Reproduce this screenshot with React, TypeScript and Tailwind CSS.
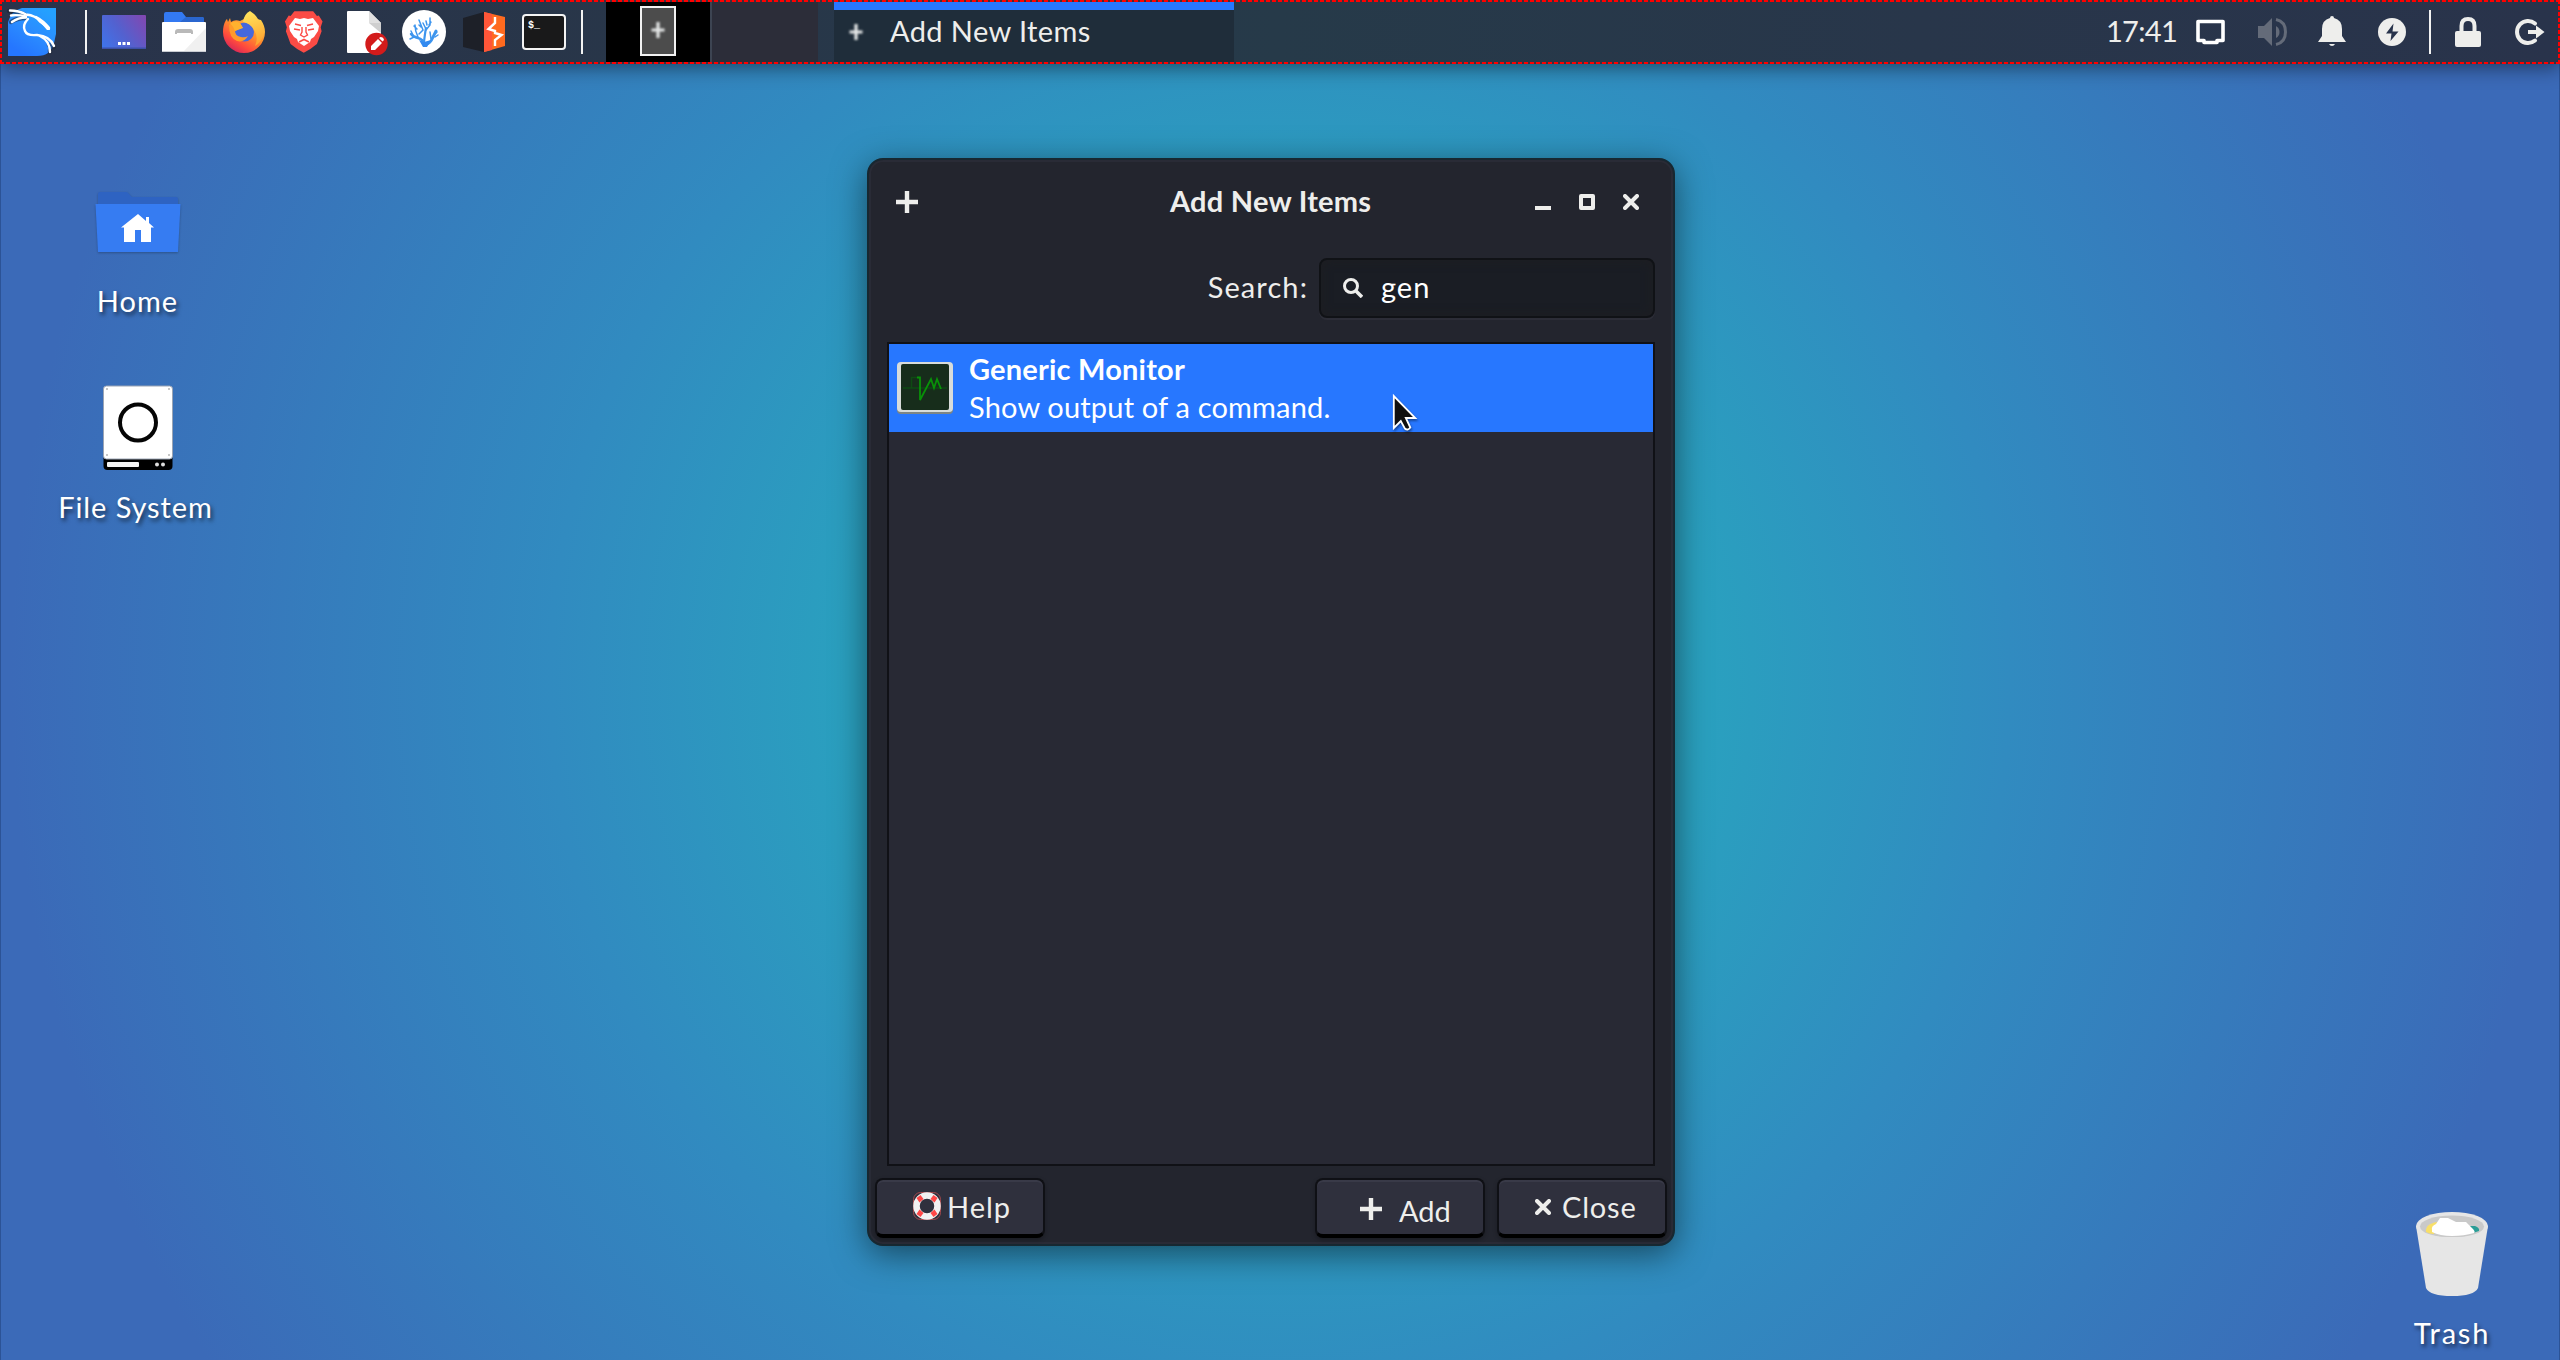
import type { ReactNode } from "react";

type IconProps = { box: string; className: string; children: ReactNode };

function Icon({ box, className, children }: IconProps) {
  return (
    <svg viewBox={box} className={`block shrink-0 ${className}`} fill="none">
      {children}
    </svg>
  );
}

/* Launchers share one panel-wide coordinate system; each slot shows its own 60px window. */
function Launchers() {
  const slot = "h-[60px] w-[60px]";
  return (
    <div className="flex">
      <Icon box="94 2 60 60" className={slot}>
        <defs>
          <linearGradient id="desk" x1="102" y1="46" x2="146" y2="16" gradientUnits="userSpaceOnUse">
            <stop stopColor="#3f74ea" />
            <stop offset=".45" stopColor="#5361cf" />
            <stop offset="1" stopColor="#8347b0" />
          </linearGradient>
        </defs>
        <rect x="102" y="15" width="44" height="34" rx="1" fill="url(#desk)" />
        <path d="M102 47.5h44v1.5h-44z" fill="#3c50a8" />
        <path d="M118 42h3v3h-3zM122.500 42h3v3h-3zM127 42h3v3h-3z" fill="#fff" />
      </Icon>
      <Icon box="154 2 60 60" className={slot}>
        <path d="M164 23V14q0-2 2-2h16l4 5h16q2 0 2 2v4z" fill="#3379f2" />
        <path d="M180 22l6-5h16q2 0 2 2v3z" fill="#2a66cf" />
        <rect x="162" y="22" width="44" height="30" rx="1" fill="#fff" />
        <path d="M206 28v23q0 1-1 1h-22z" fill="#f0f0f0" />
        <path d="M162 51h44v1h-44z" fill="#c9ccd2" />
        <path d="M175 34v-2q0-3 3-3h12q3 0 3 3v2h-2v-1h-14v1z" fill="#b9b9b9" />
      </Icon>
      <Icon box="214 2 60 60" className={slot}>
        <defs>
          <linearGradient id="ffBody" x1="256" y1="14" x2="232" y2="52" gradientUnits="userSpaceOnUse">
            <stop stopColor="#ffd84a" />
            <stop offset=".45" stopColor="#ff8f2c" />
            <stop offset=".75" stopColor="#ff4a3d" />
            <stop offset="1" stopColor="#d3235c" />
          </linearGradient>
          <linearGradient id="ffTail" x1="250" y1="11" x2="262" y2="44" gradientUnits="userSpaceOnUse">
            <stop stopColor="#ffe45c" />
            <stop offset="1" stopColor="#ffa02e" />
          </linearGradient>
        </defs>
        <path d="M244 53a21 21 0 0 1-21-21q0-7 3-12l1-1 1 3 2-4 1 4q4-3 9-1l8-4 13 3q4 6 4 12a21 21 0 0 1-21 21z" fill="url(#ffBody)" />
        <circle cx="244.500" cy="32" r="9.500" fill="#4668dc" />
        <path d="M250 11q6 4 8 8 6 5 6 14-2 9-9 13 4-9-1-16-4-7-11-8 1-8 7-11z" fill="url(#ffTail)" />
        <path d="M229 25q5-5 11-2l3 5h-1q-4 1-7 3 0 5 6 6 4 1 7-1-4 7-11 5-8-3-8-16z" fill="#ff9a2b" />
        <path d="M230 23q6-3 10 0l3 5-8 3q-2-5-5-8z" fill="#ffb22e" />
      </Icon>
      <Icon box="274 2 60 60" className={slot}>
        <path d="M294 11h20l4 5 2-.5 4 6-2 6 1 4-5 13q-6 5-14 9-8-4-14-9l-5-13 1-4-2-6 4-6 2 .5z" fill="#fb4b45" transform="matrix(.94 0 0 .98 18 .4)" />
        <path d="M295 18l5 1 4-1 4 1 5-1 6 8-1 5-4 6-3 2-1 3-6 4-6-4-1-3-3-2-4-6-1-5z" fill="#fff" />
        <path d="M295 24l6 1.500M313 24l-6 1.500M302 27v5l-1.500 3 3.500 2 3.500-2-1.500-3v-5" stroke="#fb4b45" strokeWidth="1.400" />
        <path d="M294 29l6 1M314 29l-6 1M299 42l5-2.500 5 2.500" stroke="#fb4b45" strokeWidth="1.700" />
      </Icon>
      <Icon box="334 2 60 60" className={slot}>
        <path d="M347 12q0-1 1-1h21l12 12v29q0 1-1 1h-32q-1 0-1-1z" fill="#fff" />
        <path d="M369 11l12 12h-12z" fill="#e0e0e0" />
        <path d="M369 23h12v10z" fill="#cfcfcf" />
        <circle cx="376.500" cy="44" r="11.200" fill="#d31b1b" />
        <path d="M371 50v-4l7-7 4 4-7 7zM379 38l1.500-1q3 0 3.500 3l-1.500 1.500z" fill="#fff" />
      </Icon>
      <Icon box="394 2 60 60" className={slot}>
        <circle cx="424" cy="32" r="22" fill="#fff" />
        <g stroke="#3d95ee" strokeLinecap="round">
          <path d="M425 45q-2-6-7-7t-7-4" strokeWidth="2.400" />
          <path d="M425 45q6-2 7-6l4-8" strokeWidth="2.800" />
          <path d="M424 42q1-9 2-14" strokeWidth="2.200" />
          <path d="M418 37q-3-6-3-12M413 35l-2-4M419 34l4-4-4-10M417 29l-3-3M426 29l-3-6M426 30l4-5v-7M421 27l-2-2M427 25l-1-4M431 39l-1-7M434 35l3-3M435 37l3-2M410 39l4-2M429 25l2-3" strokeWidth="1.500" />
        </g>
        <path d="M419 40l5 2 7-2-4 7h-4z" fill="#338af0" />
      </Icon>
      <Icon box="454 2 60 60" className={slot}>
        <path d="M463 18l21-6v40l-21-5z" fill="#1d2028" />
        <path d="M484 12l21 5v29l-21 6z" fill="#ff6a1f" />
        <path d="M484 12l8 2v36l-8 2z" fill="#ff5638" />
        <path d="M495 17v6l-6.500 6 6.500 2v2l6.500 2-6.500 5v6" stroke="#fff" strokeWidth="2.400" />
      </Icon>
      <div className="flex h-[60px] w-[60px] items-center justify-center">
        <div className="h-9 w-11 rounded-[4px] border-2 border-[#f4f4f4] bg-[#19191a] pt-1 pl-1 font-['Liberation_Mono'] text-[10px] leading-3 font-bold text-white">
          $_
        </div>
      </div>
    </div>
  );
}

function KaliLogo() {
  return (
    <Icon box="2 2 60 60" className="h-[60px] w-[60px]">
      <defs>
        <linearGradient id="kali" x1="20" y1="52" x2="46" y2="10" gradientUnits="userSpaceOnUse">
          <stop stopColor="#2576ff" />
          <stop offset=".5" stopColor="#2b8dff" />
          <stop offset="1" stopColor="#24a1ff" />
        </linearGradient>
      </defs>
      <path d="M22 8h34v26l-2 9q-3 13-17 13H8V22Q12 10 22 8z" fill="url(#kali)" />
      <path
        d="M9 11q9 0 16 4M11 22q6-4 14-4M49 45l5 2M50 50v2"
        stroke="#1c2333"
        strokeWidth="4.500"
        strokeLinecap="round"
        opacity=".55"
      />
      <g stroke="#fff" strokeWidth="2.400" strokeLinecap="round" strokeLinejoin="round">
        <path d="M10 10.500q9 0 16 4 10 1 14 7l8 6" />
        <path d="M11 15.500q7-1 15 1" />
        <path d="M12 22q6-4.500 14-4.500" />
        <path d="M36 17q8 4 13 11" />
        <path d="M28 19q-6 6-3 12 2 5 12 4 13 1 17 11" />
        <path d="M40 36q10 5 10 16" />
      </g>
      <path d="M41 23l8 3 1 4-3 0z" fill="#fff" />
    </Icon>
  );
}

function SoftPlus() {
  return (
    <Icon box="0 0 16 16" className="h-4 w-4 blur-[0.8px]">
      <path d="M8 0v16M1.500 8h13" stroke="#e6e8e8" strokeWidth="3.200" />
    </Icon>
  );
}

function Tray() {
  return (
    <div className="ml-auto flex items-center">
      <span className="w-[74px] pb-[2px] text-[29px] leading-9 tracking-[-0.7px] text-[#eeeeec]">17:41</span>
      <Icon box="2180 2 60 60" className="h-[60px] w-[60px]">
        <path d="M2198 21.500h25v19h-6v2h-13v-2h-6z" stroke="#fff" strokeWidth="3.600" strokeLinejoin="round" />
      </Icon>
      <Icon box="2240 2 60 60" className="h-[60px] w-[60px]">
        <path d="M2258 26h6l8-8v28l-8-8h-6z" fill="#646b79" />
        <path d="M2276 26q3.500 2 3.500 6t-3.500 6z" fill="#646b79" />
        <path d="M2276 19.500q9.500 2 9.500 12.500t-9.500 12.500" stroke="#646b79" strokeWidth="3" />
      </Icon>
      <Icon box="2300 2 60 60" className="h-[60px] w-[60px]">
        <path d="M2332 16q2 0 2 2 8 2 8 11v7l4 6h-28l4-6v-7q0-9 8-11 0-2 2-2zM2329 44h6q-1 2-3 2t-3-2z" fill="#eeeeec" />
      </Icon>
      <Icon box="2362 2 60 60" className="ml-[2px] h-[60px] w-[60px]">
        <circle cx="2392" cy="32" r="14" fill="#eeeeec" />
        <path d="M2393.500 23.500l-7.500 10h5.500l-1 7.500 8-9.500h-6z" fill="#28334b" />
      </Icon>
      <div className="ml-[7px] h-11 w-[2px] bg-[#f2f2f2]" />
      <Icon box="2438 2 60 60" className="ml-[7px] h-[60px] w-[60px]">
        <rect x="2455" y="31" width="26" height="16" rx="2" fill="#eeeeec" />
        <path d="M2461.500 31v-5q0-7 6.500-7t6.500 7v5" stroke="#eeeeec" strokeWidth="4" />
      </Icon>
      <Icon box="2500 2 60 60" className="ml-[2px] h-[60px] w-[60px]">
        <path d="M2535 23.500a11 11 0 1 0 0 17" stroke="#eeeeec" strokeWidth="4" strokeLinecap="round" />
        <path d="M2528 30h8v-4.500l8.500 6.500-8.500 6.500v-4.500h-8z" fill="#eeeeec" />
      </Icon>
    </div>
  );
}

function Panel() {
  return (
    <header className="relative flex h-16 items-center bg-[linear-gradient(90deg,#29334b_0%,#283649_25%,#263a49_50%,#28364a_75%,#29334b_100%)] pl-[2px] shadow-[0_4px_18px_rgba(0,0,0,0.45)]">
      <KaliLogo />
      <div className="ml-[23px] h-11 w-[2px] bg-[#f2f2f2]" />
      <div className="ml-[7px]">
        <Launchers />
      </div>
      <div className="ml-[7px] h-11 w-[2px] bg-[#f2f2f2]" />
      <div className="ml-[23px] flex h-[60px]">
        <div className="flex w-[104px] justify-center bg-black">
          <div className="mt-1 flex h-[50px] w-9 items-center justify-center border-2 border-[#f2f2f2] bg-[#4c4c4c] pb-[2px]">
            <SoftPlus />
          </div>
        </div>
        <div className="w-[2px] bg-[#3d4452]" />
        <div className="w-[106px] bg-[#2c2d39]" />
      </div>
      <div className="ml-4 flex h-[60px] w-[400px] items-center border-t-8 border-[#2777ff] bg-[#1f2d3a] pb-2 pl-[14px]">
        <div className="flex items-center">
          <SoftPlus />
          <span className="ml-[26px] pb-[2px] text-[29px] leading-9 tracking-[0.4px] text-[#eeeeec]">Add New Items</span>
        </div>
      </div>
      <Tray />
      <div className="pointer-events-none absolute inset-x-0 top-0 h-[2px] bg-[repeating-linear-gradient(90deg,#ff0000_0_4px,#3a2f3c_4px_6px)]" />
      <div className="pointer-events-none absolute inset-x-0 bottom-0 h-[2px] bg-[repeating-linear-gradient(90deg,#ff0000_0_4px,#3a2f3c_4px_6px)]" />
      <div className="pointer-events-none absolute inset-y-0 left-0 w-[2px] bg-[repeating-linear-gradient(180deg,#ff0000_0_4px,#3a2f3c_4px_6px)]" />
      <div className="pointer-events-none absolute inset-y-0 right-0 w-[2px] bg-[repeating-linear-gradient(180deg,#ff0000_0_4px,#3a2f3c_4px_6px)]" />
    </header>
  );
}

const label = "whitespace-nowrap text-[29px] leading-9 text-white [text-shadow:2px_3px_4px_rgba(0,0,0,0.6)]";

function DesktopIcons() {
  return (
    <>
      <div className="absolute top-[180px] left-[38px] flex w-[200px] flex-col items-center">
        <Icon box="90 180 96 80" className="h-20 w-24 drop-shadow-[0_1px_1px_rgba(0,0,0,0.25)]">
          <path d="M98 206v-12q0-2 2-2h26q2 0 3 2l3 3h44q2 0 2 2v7z" fill="#2e63c2" />
          <path d="M95.500 204h85l-2.500 48h-80z" fill="#367cf2" />
          <path d="M138 214l8 7v-4h3v6l5 4.500h-3V242h-10v-12h-6v12h-11v-14.500h-3z" fill="#fff" />
        </Icon>
        <span className={`${label} mt-[23px] -ml-px tracking-[1px]`}>Home</span>
      </div>
      <div className="absolute top-[380px] left-[38px] flex w-[200px] flex-col items-center">
        <Icon box="98 380 80 96" className="h-24 w-20">
          <rect x="103.500" y="440" width="69" height="30" rx="4" fill="#000" />
          <rect x="103.500" y="386" width="69" height="73" rx="3" fill="#fff" stroke="#9aa4b4" />
          <circle cx="138" cy="422.500" r="18" stroke="#050505" strokeWidth="4" />
          <rect x="107" y="462" width="32" height="5" rx="1" fill="#f4f4f4" />
          <circle cx="157" cy="464.500" r="2" fill="#ddd" />
          <circle cx="163" cy="464.500" r="2" fill="#ddd" />
          <g fill="#b5b5b5">
            <circle cx="107" cy="389" r="1" />
            <circle cx="169" cy="389" r="1" />
            <circle cx="107" cy="455" r="1" />
            <circle cx="169" cy="455" r="1" />
          </g>
        </Icon>
        <span className={`${label} mt-[13px] -ml-[5px] tracking-[0.9px]`}>File System</span>
      </div>
      <div className="absolute top-[1206px] left-[2352px] flex w-[200px] flex-col items-center">
        <Icon box="2404 1206 96 96" className="h-24 w-24">
          <path d="M2416 1226h72l-10 62q-4 8-26 8t-26-8z" fill="#e6e6e6" />
          <ellipse cx="2452" cy="1226" rx="36" ry="14" fill="#e6e6e6" />
          <ellipse cx="2452" cy="1226.500" rx="32" ry="11" fill="#c9c9c9" />
          <path d="M2426 1232q-1-8 11-10l-3 12q-5 0-8-2z" fill="#f8df69" />
          <path d="M2469 1226h6q5 2 4 5l-6 2z" fill="#2a9d96" />
          <path d="M2432 1230q-1-4 4-6l4-6h8l8 4 10 0 6 6q4 4 2 5-10 3-22 3t-20-4z" fill="#fff" />
          <path d="M2418 1231q6 6 34 6t34-6q-5 9-34 9t-34-9z" fill="#e6e6e6" />
        </Icon>
        <span className={`${label} mt-[13px] tracking-[1.8px]`}>Trash</span>
      </div>
    </>
  );
}

function Plus() {
  return (
    <Icon box="0 0 22 22" className="h-[22px] w-[22px]">
      <path d="M11 0v22M0 11h22" stroke="#eeeeec" strokeWidth="4.400" />
    </Icon>
  );
}

function Cross() {
  return (
    <Icon box="0 0 16 16" className="h-4 w-4">
      <path d="M2 2l12 12M14 2L2 14" stroke="#eeeeec" strokeWidth="4" strokeLinecap="round" />
    </Icon>
  );
}

const button =
  "flex h-[60px] w-[170px] items-center rounded-[8px] border-2 border-b-4 border-[#0f1015] border-b-black bg-[#2f303d] text-[29px] leading-9 text-[#eeeeec] shadow-[inset_0_2px_0_#393a48,0_2px_4px_rgba(0,0,0,0.25)]";

function Dialog() {
  return (
    <div className="absolute top-[158px] left-[867px] flex h-[1088px] w-[808px] flex-col rounded-[16px] border-2 border-[#172831] bg-[#23252e] shadow-[inset_0_0_0_2px_#292b36,0_8px_34px_rgba(0,0,0,0.5)]">
      <div className="flex h-[84px] items-center pr-[34px] pl-[27px]">
        <Plus />
        <h1 className="ml-[252px] pb-[2px] text-[29px] leading-9 font-bold tracking-[0.25px] text-[#eeeeec]">Add New Items</h1>
        <div className="ml-auto flex items-center gap-7">
          <div className="mt-3 h-1 w-4 bg-[#eeeeec]" />
          <div className="h-4 w-4 rounded-[2px] border-4 border-[#eeeeec]" />
          <Cross />
        </div>
      </div>
      <div className="mt-[14px] flex items-center justify-end pr-[18px]">
        <span className="mr-[11px] pb-[2px] text-[29px] leading-9 tracking-[1.1px] text-[#eeeeec]">Search:</span>
        <div className="flex h-[60px] w-[336px] items-center rounded-[8px] border-2 border-[#101216] bg-[#1a1d24] pl-[22px] shadow-[inset_0_0_10px_2px_#1d1e22,0_2px_0_#2c2d37]">
          <Icon box="0 0 20 20" className="h-5 w-5">
            <circle cx="8" cy="8" r="6.500" stroke="#eeeeec" strokeWidth="3" />
            <path d="M13 13l6 6" stroke="#eeeeec" strokeWidth="3.600" />
          </Icon>
          <span className="ml-[18px] pb-[2px] text-[29px] leading-9 tracking-[1px] text-white">gen</span>
        </div>
      </div>
      <div className="mx-[18px] mt-6 h-[824px] border-2 border-[#101116] bg-[#282934]">
        <div className="flex h-[88px] items-center bg-[#2777ff] pl-2 text-white">
          <Icon box="0 0 56 52" className="h-[52px] w-14">
            <rect y="1" width="56" height="51" rx="4" fill="#7d8584" />
            <rect width="56" height="50" rx="4" fill="#d8dcda" />
            <rect x="4" y="2" width="48" height="46" rx="2" fill="#172d1b" />
            <path d="M6 26h44M14.500 26V15.500H22" stroke="#0e4a13" strokeWidth="1.500" />
            <path d="M20 15.500h3V38l11-21 3 9 3-9 4 10" stroke="#089108" strokeWidth="1.800" />
          </Icon>
          <div className="ml-4 flex flex-col text-[29px] leading-[38px]">
            <span className="font-bold tracking-[0.2px]">Generic Monitor</span>
            <span className="tracking-[0.17px]">Show output of a command.</span>
          </div>
        </div>
      </div>
      <div className="mt-3 flex px-[6px]">
        <div className={`${button} pl-9`}>
          <Icon box="0 0 28 28" className="mb-[2px] h-7 w-7">
            <rect x=".5" y=".5" width="27" height="27" rx="7" stroke="#a3484c" />
            <circle cx="14" cy="14" r="10.500" stroke="#f1f1f1" strokeWidth="6.500" />
            <path d="M3.500 6l4-3 3 4-4 3.500zM24.500 6l-4-3-3 4 4 3.500zM3.500 22l4 3 3-4-4-3.500zM24.500 22l-4 3-3-4 4-3.500z" fill="#ff4646" />
          </Icon>
          <span className="ml-[6px] tracking-[1px]">Help</span>
        </div>
        <div className={`${button} ml-auto pl-[43px]`}>
          <div className="mt-1">
            <Plus />
          </div>
          <span className="mt-2 ml-[17px]">Add</span>
        </div>
        <div className={`${button} ml-3 pl-9`}>
          <Cross />
          <span className="ml-[11px] tracking-[0.8px]">Close</span>
        </div>
      </div>
    </div>
  );
}

function Cursor() {
  return (
    <svg viewBox="0 0 32 44" className="absolute top-[391px] left-[1391px] h-11 w-8 drop-shadow-[1px_2px_1px_rgba(0,0,0,0.4)]" fill="none">
      <path d="M2.800 5v32l7-7 4 7.500q3 2.500 5.500-1l-4.500-9.500h9.500z" fill="#101010" stroke="#fff" strokeWidth="1.800" />
    </svg>
  );
}

export default function App() {
  return (
    <div className="relative h-[1360px] w-[2560px] overflow-hidden bg-[radial-gradient(circle_at_50%_50%,#28a9b9_0,#2aa0bf_430px,#318bc0_730px,#3b6ab8_1270px)] font-['Lato','Noto_Sans',sans-serif] shadow-[inset_1px_0_0_#2c5396,inset_-1px_0_0_#2c5396]">
      <Panel />
      <DesktopIcons />
      <Dialog />
      <Cursor />
    </div>
  );
}
